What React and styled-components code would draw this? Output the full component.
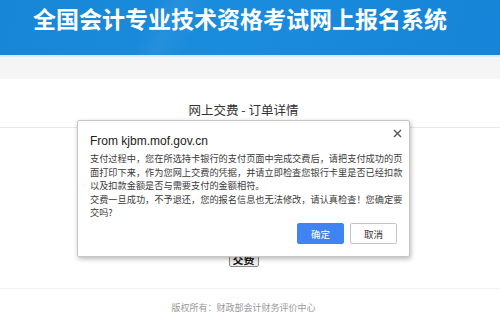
import React from 'react'
import styled, { createGlobalStyle, css } from 'styled-components'

const GlobalStyle = createGlobalStyle`
  html, body {
    margin: 0;
    padding: 0;
    background: #fff;
  }
  body {
    width: 500px;
    height: 316px;
    overflow: hidden;
    font-family: "Noto Sans CJK SC", "Liberation Sans", sans-serif;
  }
`

const Page = styled.div`
  position: relative;
  width: 500px;
  height: 316px;
  overflow: hidden;
`

const Header = styled.header`
  height: 55px;
  box-sizing: border-box;
  padding-left: 33px;
  display: flex;
  align-items: flex-start;
  background:
    linear-gradient(115deg, rgba(255,255,255,0) 30%, rgba(255,255,255,0.05) 34%, rgba(255,255,255,0) 40%),
    linear-gradient(100deg, #1886d6 0%, #1a8cdd 45%, #1684d8 100%);
`

const Title = styled.h1`
  margin: 4px 0 0;
  font-size: 23px;
  line-height: 28px;
  font-weight: 700;
  color: #fff;
`

const Strip = styled.div`
  height: 2px;
  background: #d3eaf9;
`

const NavBand = styled.div`
  height: 22px;
  background: #f5f5f5;
`

const Main = styled.main`
  padding: 23px 13px 0 0;
`

const Subtitle = styled.h2`
  margin: 0;
  text-align: center;
  font-size: 12.5px;
  line-height: 16px;
  font-weight: 400;
  color: #333;
`

const Content = styled.section`
  margin: 9px -13px 0 0;
  border-top: 1px solid #e8e8e8;
  padding: 123px 13px 21px 0;
  display: flex;
  justify-content: center;
`

const PayButton = styled.button`
  height: 16px;
  padding: 0 3px;
  font-family: "Noto Sans CJK SC", sans-serif;
  font-size: 11px;
  line-height: 12px;
  font-weight: 700;
  color: #111;
  background: #efefef;
  border: 1px solid #8a8a8a;
  border-radius: 2px;
`

const Footer = styled.footer`
  margin-right: -13px;
  border-top: 1px solid #efefef;
  padding: 13px 13px 0 0;
  text-align: center;
  font-size: 9px;
  line-height: 12px;
  color: #999;
`

const Dialog = styled.div`
  position: absolute;
  left: 77px;
  top: 120px;
  width: 333px;
  height: 137px;
  box-sizing: border-box;
  padding: 12px 8px 12px 12px;
  background: #fff;
  border: 1px solid #c6c6c6;
  border-radius: 2px;
  box-shadow: 1px 2px 5px rgba(0, 0, 0, 0.28);
  display: flex;
  flex-direction: column;
`

const DialogTitle = styled.div`
  font-family: "Liberation Sans", Arial, sans-serif;
  font-size: 12px;
  line-height: 14px;
  color: #222;
  margin-top: 1px;
`

const Close = styled.button`
  position: absolute;
  right: 6px;
  top: 6px;
  width: 12px;
  height: 12px;
  padding: 0;
  border: 0;
  background: none;
  display: flex;
  align-items: center;
  justify-content: center;
`

const Message = styled.div`
  margin-top: 4px;
  font-size: 9.2px;
  line-height: 13.5px;
  color: #3a3a3a;
  white-space: nowrap;
`

const Actions = styled.div`
  margin-top: auto;
  padding-right: 4px;
  display: flex;
  justify-content: flex-end;
  gap: 6px;
`

const ActionButton = styled.button`
  width: 47px;
  height: 21px;
  padding: 0;
  font-family: "Noto Sans CJK SC", sans-serif;
  font-size: 9.5px;
  border-radius: 2px;
  ${p => p.primary ? css`
    background: #3f84f0;
    color: #fff;
    border: 1px solid #3f84f0;
  ` : css`
    background: #fff;
    color: #333;
    border: 1px solid #c4c4c4;
  `}
`

export default function App() {
  return (
    <>
      <GlobalStyle />
      <Page>
        <Header>
          <Title>全国会计专业技术资格考试网上报名系统</Title>
        </Header>
        <Strip />
        <NavBand />
        <Main>
          <Subtitle>网上交费 - 订单详情</Subtitle>
          <Content>
            <PayButton>交费</PayButton>
          </Content>
          <Footer>版权所有：财政部会计财务评价中心</Footer>
        </Main>

        <Dialog>
          <Close aria-label="close">
            <svg width="9" height="9" viewBox="0 0 9 9">
              <path d="M1 1L8 8M8 1L1 8" stroke="#555" strokeWidth="1.4" />
            </svg>
          </Close>
          <DialogTitle>From kjbm.mof.gov.cn</DialogTitle>
          <Message>
            支付过程中，您在所选持卡银行的支付页面中完成交费后，请把支付成功的页<br />
            面打印下来，作为您网上交费的凭据，并请立即检查您银行卡里是否已经扣款<br />
            以及扣款金额是否与需要支付的金额相符。<br />
            交费一旦成功，不予退还，您的报名信息也无法修改，请认真检查！您确定要<br />
            交吗?
          </Message>
          <Actions>
            <ActionButton primary>确定</ActionButton>
            <ActionButton>取消</ActionButton>
          </Actions>
        </Dialog>
      </Page>
    </>
  )
}
